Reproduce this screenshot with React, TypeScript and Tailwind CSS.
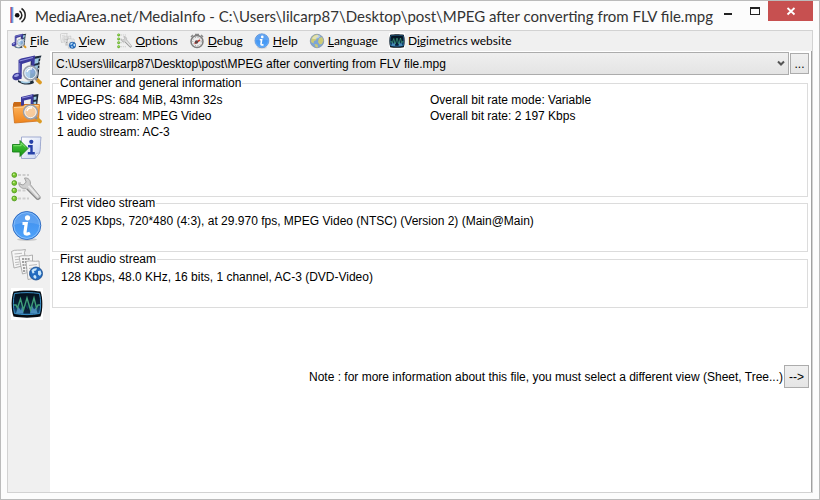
import type { ReactNode } from "react";

interface IconProps {
  className?: string;
}

interface LensProps {
  glass: string;
}

const Lens = ({ glass }: LensProps) => (
  <>
    <path d="m26.500 26 2.500 2.500" stroke="#dc9a24" strokeWidth="3.800" strokeLinecap="round" />
    <path d="m24 24 2 2" stroke="#8b8b95" strokeWidth="2.400" />
    <circle cx="19.500" cy="19" r="6.900" fill={glass} fillOpacity=".8" stroke="#9a9fa8" strokeWidth="1.600" />
    <circle cx="19.500" cy="19" r="5.700" fill="none" stroke="#f2f5f8" strokeWidth="1" />
    <path d="M16 18a4 4 0 0 1 5-3" fill="none" stroke="#fff" strokeWidth="1.400" />
  </>
);

const MediaIcon = ({ className }: IconProps) => (
  <svg viewBox="0 0 32 32" className={className} aria-hidden="true">
    <path d="M20 3 30.500 1.500C28 7 29 14 27 24H19z" fill="#1d2b3a" />
    <path d="m23 5 5-1-1 5-4 1zM22.500 12l4.500-1-.5 5-4 1z" fill="#9cc9e4" />
    <path d="M29 3.500v1.500M28.200 7v1.500M28 10.500V12M27.700 14v1.500" stroke="#e8f0f5" strokeWidth="1" />
    <path d="M7 26c5 3 10 3 15 0l1 3c-5 2.500-11 2-16-1z" fill="#1d2b3a" />
    <path d="M10 27.500c3 1.500 6 1.500 9 .5" fill="none" stroke="#a8d0e8" strokeWidth="1.800" />
    <path d="M7.500 6 10 4.500 24 1.500l-1 18h-3l.500-12.500-9.500 3-.5 15H7.500z" fill="#3c3a9c" />
    <path d="M8.500 7 22 3.500" stroke="#8e90dc" strokeWidth="1.200" />
    <path d="M8.700 9v14" stroke="#7577cb" strokeWidth="1" />
    <ellipse cx="6" cy="22.500" rx="4.800" ry="3.600" transform="rotate(-18 6 22.500)" fill="#3d3b9d" />
    <ellipse cx="5.300" cy="21.600" rx="2.500" ry="1.400" transform="rotate(-18 5 21)" fill="#9b9fe2" />
    <Lens glass="#9cc6ea" />
  </svg>
);

const FolderIcon = ({ className }: IconProps) => (
  <svg viewBox="0 0 32 32" className={className} aria-hidden="true">
    <defs>
      <linearGradient id="folder" x2="0" y2="1">
        <stop stopColor="#ffb65e" />
        <stop offset="1" stopColor="#ee841d" />
      </linearGradient>
    </defs>
    <path d="M2 11 3 9h7l1.500 2H28v4H2z" fill="#c96a16" />
    <path d="m21 2 6.500-1L26 13h-5z" fill="#1d2b3a" />
    <path d="m22.500 4 3-.5-.2 3-2.800.5zM22.500 9l2.700-.5v3l-2.700.3z" fill="#9cc9e4" />
    <path d="M10 4 22.500 1 22 13h-2.500l.3-7L13 7.500V13h-3z" fill="#3c3a9c" />
    <path d="M11 5 21 2.700" stroke="#8e90dc" />
    <path d="M2 13.500 12 13l2-1.500h14.500L27.500 28 3.500 30z" fill="url(#folder)" stroke="#cf711b" strokeWidth=".8" />
    <path d="m3 14.500 9.500-.5 2-1.500h12.800" fill="none" stroke="#ffd59a" />
    <Lens glass="#f6d6b4" />
  </svg>
);

const ExportIcon = ({ className }: IconProps) => (
  <svg viewBox="0 0 32 32" className={className} aria-hidden="true">
    <defs>
      <linearGradient id="sheet" x2="1" y2="1">
        <stop stopColor="#ffffff" />
        <stop offset="1" stopColor="#c6d3f2" />
      </linearGradient>
      <linearGradient id="arrow" x2="0" y2="1">
        <stop stopColor="#4fd044" />
        <stop offset="1" stopColor="#149312" />
      </linearGradient>
    </defs>
    <path d="M10.500 5H30c-1 7 0 12-1.500 16L24 26.500H10.500z" fill="url(#sheet)" stroke="#98a4cc" strokeWidth=".9" />
    <path d="m24 26.500 1-5 3.500-.5z" fill="#f5f8ff" stroke="#98a4cc" strokeWidth=".6" />
    <circle cx="20.300" cy="9.800" r="2.100" fill="#2540a8" />
    <path d="M17 14.300h3.500v6.500M16.800 21.300h7" fill="none" stroke="#2540a8" strokeWidth="2.400" />
    <path d="M1.500 12.500H9v-4l8 8L9 24.500v-4.500H1.500z" fill="url(#arrow)" stroke="#17801a" strokeWidth=".9" />
    <path d="M2.500 13.700h7.600V11l4.400 4" fill="none" stroke="#8ae878" strokeWidth=".9" />
  </svg>
);

const OptionsIcon = ({ className }: IconProps) => (
  <svg viewBox="0 0 32 32" className={className} aria-hidden="true">
    <path d="M7 4h3M11.500 4h3M16 4h2M7 12h3M7 19.500h3M11.500 19.500h3M7 27.500h3M11.500 27.500h3M16 27.500h2" stroke="#cdcdcd" strokeWidth="2" />
    <g fill="#78c52e" stroke="#4d981b" strokeWidth=".8">
      <circle cx="3.300" cy="4" r="2.400" />
      <circle cx="3.300" cy="12" r="2.400" />
      <circle cx="3.300" cy="19.500" r="2.400" />
      <circle cx="3.300" cy="27.500" r="2.400" />
    </g>
    <g fill="#c5f291">
      <circle cx="2.800" cy="3.300" r=".9" />
      <circle cx="2.800" cy="11.300" r=".9" />
      <circle cx="2.800" cy="18.800" r=".9" />
      <circle cx="2.800" cy="26.800" r=".9" />
    </g>
    <path d="M13.500 7c4-.5 6.500 2.500 5.800 6.500L29 25.500c1.200 2-1.500 4.200-3.500 2.500L14.800 17.300c-3.500.7-6.500-1-7-4.500l4.400 1.200 3-3z" fill="#d0d0d0" stroke="#9a9a9a" strokeWidth=".9" />
    <path d="m17.500 15 9.500 10.500" stroke="#ededed" strokeWidth="1.500" />
    <path d="m16 18 9.500 9.700c1.300 1 3 .3 3.400-1" fill="none" stroke="#888" strokeWidth="1.100" />
  </svg>
);

const InfoIcon = ({ className }: IconProps) => (
  <svg viewBox="0 0 32 32" className={className} aria-hidden="true">
    <defs>
      <linearGradient id="info" x2="0" y2="1">
        <stop stopColor="#3f8cea" />
        <stop offset="1" stopColor="#4ea3fb" />
      </linearGradient>
    </defs>
    <ellipse cx="16" cy="29.500" rx="10" ry="1.500" fill="#c9c9c9" />
    <circle cx="15.800" cy="15.500" r="14" fill="url(#info)" stroke="#2c67bb" strokeWidth=".9" />
    <circle cx="15.800" cy="15.500" r="12.900" fill="none" stroke="#8fc3fb" strokeWidth=".9" />
    <path d="M3.500 15a12.300 12.300 0 0 1 24.600 0c-7-3-17-3-24.600 0z" fill="#8dbcf6" fillOpacity=".35" />
    <circle cx="16.500" cy="7.800" r="2.600" fill="#fff" />
    <path d="M11.500 13.500h3.700l-1.200 8.500c-.3 2.500 2.500 2.500 5 1" fill="none" stroke="#fff" strokeWidth="3.200" />
  </svg>
);

const Globe = () => (
  <>
    <circle cx="25" cy="24.500" r="6.500" fill="#236cc0" stroke="#164886" strokeWidth=".8" />
    <path d="M20.500 21.500c1.500-2 4-2.500 5.500-2l-1 2-2 .5.500 2-2 .5zM27 22l2.500-.5 1 3-1.500 2.500-2-1.500zM23 26l2 .5.500 2-1.300 1.500-2-2z" fill="#c7e5f9" />
  </>
);

const SheetsIcon = ({ className }: IconProps) => (
  <svg viewBox="0 0 32 32" className={className} aria-hidden="true">
    <g fill="#f6f6f6" stroke="#a8a8a8" strokeWidth=".9">
      <path d="M.5 2.500C4 0 8 2 14.500.5L13.500 3.500 15 16 3 19z" />
      <path d="M8 7.500c4-2 8 .5 13.500-1.500V22l-10 3z" />
      <path d="M15 12.500c5-1.500 8 .5 13-.5l1 16-12 2.500z" />
    </g>
    <path d="M3.500 5 11 4.200M3.700 8l4-.5M4 10.700l4-.5M4 13.500l4.500-.5M4.500 16l4-1M18 16.500l8-1M18 19.500l3-.5M18.500 22.500h1M18.500 25.500h1" stroke="#bdbdbd" strokeWidth="1.100" />
    <path d="M11 10h8M11 13h4M11.500 16H15M12 19h3.500M12 22h3.500" stroke="#858585" strokeWidth="1.500" strokeDasharray="2 .8" />
    <Globe />
  </svg>
);

const WaveIcon = ({ className }: IconProps) => (
  <svg viewBox="0 0 32 32" className={className} aria-hidden="true">
    <defs>
      <linearGradient id="glow" x2="0" y2="1">
        <stop stopColor="#04101a" />
        <stop offset=".5" stopColor="#072138" />
        <stop offset="1" stopColor="#1c5f95" />
      </linearGradient>
    </defs>
    <rect width="32" height="32" fill="#fff" />
    <path d="M2.500 3.500C10 2 22 2 29.500 3.500 32 10 32 22 29.500 28.500 22 30 10 30 2.500 28.500 0 22 0 10 2.500 3.500z" fill="#050b12" />
    <path d="M3.500 5.500c8-1.200 17-1.200 25 0 1.500 6 1.500 15 0 20-8 1.500-17 1.500-25 0-1.500-6-1.500-14 0-20z" fill="url(#glow)" stroke="#3a8fc6" strokeWidth="1" />
    <path d="m5 25.500 2-7 3 4 1.500-6 1 9zM19 25.500l2-8 2 4 2-2 1.500 6z" fill="#6fb9e6" fillOpacity=".6" />
    <path d="M12.500 25.500V15l4 6 2.500-3v7.500z" fill="#050d1a" fillOpacity=".65" />
    <path d="M3 17h2l1.500 3 3-9 3 11L16 10l3.500 12L23 10l2.500 10 1.500-3h2" fill="none" stroke="#3f9d78" strokeWidth="1.400" />
  </svg>
);

const DebugIcon = ({ className }: IconProps) => (
  <svg viewBox="0 0 32 32" className={className} aria-hidden="true">
    <path d="M12 3h8M4 8l4-4M28 8l-4-4" stroke="#888" strokeWidth="3" />
    <circle cx="16" cy="17" r="12" fill="#eee" stroke="#7d7d7d" strokeWidth="3" />
    <circle cx="16" cy="17" r="8.500" fill="none" stroke="#999" strokeWidth="2" strokeDasharray="2 3" />
    <path d="m11 21 11-7" stroke="#cc3b31" strokeWidth="3" />
    <circle cx="15" cy="18" r="3.500" fill="#5d4545" />
  </svg>
);

const LanguageIcon = ({ className }: IconProps) => (
  <svg viewBox="0 0 32 32" className={className} aria-hidden="true">
    <circle cx="16" cy="16" r="13.500" fill="#7ca5d7" stroke="#8492a2" strokeWidth="1.500" />
    <path d="M5 10c3-5 8-7 12-7l2 4-5 3 1 4-5 2-1 5-5-3zM20 10l6-2 3 7-3 7-5 1-3-5zM11 22l6 1 1 6-5-1z" fill="#cdcb75" />
    <path d="M6 11c3-6 11-9 17-5-4 5-10 8-17 5z" fill="#fff" fillOpacity=".45" />
  </svg>
);

const AppLogo = () => (
  <svg viewBox="0 0 18 17" className="h-[17px] w-[18px] shrink-0" aria-hidden="true">
    <path d="M1 0v16" stroke="#e02a2a" strokeWidth="1.200" />
    <path d="M2 0v16" stroke="#2451db" strokeWidth="1.200" />
    <path d="M3 0v16" stroke="#55b5de" strokeWidth=".7" />
    <circle cx="7.200" cy="8.200" r="2.300" fill="#111" />
    <path d="M9.500 4a5 5 0 0 1 0 8.500" fill="none" stroke="#222" strokeWidth="1.500" />
    <path d="M11.500 1.500a8 8 0 0 1 0 13.500" fill="none" stroke="#222" strokeWidth="1.500" />
  </svg>
);

const menus = [
  { key: "F", rest: "ile", Icon: MediaIcon },
  { key: "V", rest: "iew", Icon: SheetsIcon },
  { key: "O", rest: "ptions", Icon: OptionsIcon },
  { key: "D", rest: "ebug", Icon: DebugIcon },
  { key: "H", rest: "elp", Icon: InfoIcon },
  { key: "L", rest: "anguage", Icon: LanguageIcon },
];

const tools = [
  { label: "Open file", Icon: MediaIcon },
  { label: "Open folder", Icon: FolderIcon },
  { label: "Export", Icon: ExportIcon },
  { label: "Options", Icon: OptionsIcon },
  { label: "About", Icon: InfoIcon },
  { label: "View", Icon: SheetsIcon },
  { label: "Digimetrics", Icon: WaveIcon },
];

const TitleBar = () => (
  <header className="flex h-[29px] items-start pl-[9px] pr-[6px]">
    <div className="flex h-[29px] min-w-0 flex-1 items-center gap-[7px]">
      <AppLogo />
      <h1 className="whitespace-nowrap font-['Lato',sans-serif] text-[15px] leading-7 text-[#333]">
        MediaArea.net/MediaInfo - C:\Users\lilcarp87\Desktop\post\MPEG after converting from FLV file.mpg
      </h1>
    </div>
    <button type="button" aria-label="Minimize" className="flex h-5 w-[26px] items-center justify-center">
      <svg viewBox="0 0 12 12" className="size-3" aria-hidden="true">
        <path d="M2 9h8" stroke="#222" strokeWidth="2" />
      </svg>
    </button>
    <button type="button" aria-label="Maximize" className="flex h-5 w-[27px] items-center justify-center">
      <svg viewBox="0 0 12 12" className="size-3" aria-hidden="true">
        <path d="M1 2h10v8H1z" fill="#222" />
        <path d="M2 4h8v5H2z" fill="#fcfcfc" />
      </svg>
    </button>
    <button type="button" aria-label="Close" className="flex h-5 w-[45px] items-center justify-center bg-[#c75050]">
      <svg viewBox="0 0 12 12" className="size-3" aria-hidden="true">
        <path d="m2.500 3 7 6.500m0-6.500-7 6.500" stroke="#fff" strokeWidth="1.800" />
      </svg>
    </button>
  </header>
);

const MenuBar = () => (
  <nav className="flex h-5 items-center gap-[11px] bg-[#f0f0f0] pl-[3px] font-['Lato',sans-serif] text-[12px] leading-4 text-black">
    {menus.map(({ key, rest, Icon }) => (
      <button key={key} type="button" className="flex items-center gap-[3px]">
        <Icon className="size-4" />
        <span>
          <span className="underline">{key}</span>
          {rest}
        </span>
      </button>
    ))}
    <button type="button" className="flex items-center gap-[3px]">
      <WaveIcon className="size-4" />
      <span>
        D<span className="underline">i</span>gimetrics website
      </span>
    </button>
  </nav>
);

interface GroupProps {
  title: string;
  className: string;
  children: ReactNode;
}

const Group = ({ title, className, children }: GroupProps) => (
  <fieldset className={`border border-[#dcdcdc] ${className}`}>
    <legend className="ml-[6px] px-px leading-3">{title}</legend>
    {children}
  </fieldset>
);

const App = () => {
  return (
    <div className="flex min-h-screen flex-col border border-[#bbb] bg-[#fcfcfc] font-['Liberation_Sans',sans-serif] text-[12px] leading-4 text-black">
      <TitleBar />
      <div className="mx-[6px] mb-[6px] flex flex-1 flex-col border border-[#d2d2d2]">
        <MenuBar />
        <div className="flex flex-1">
          <aside className="flex w-[42px] shrink-0 flex-col items-center gap-[7px] bg-[#f0f0f0] pr-[4px] pt-[3px]">
            {tools.map(({ label, Icon }) => (
              <button key={label} type="button" aria-label={label}>
                <Icon className="block size-8" />
              </button>
            ))}
          </aside>
          <main className="min-w-0 flex-1 border-r border-[#a0a0a0] bg-white pl-[2px] pr-[2px] pt-px">
            <div className="flex items-center gap-px">
              <div className="relative min-w-0 flex-1">
                <select
                  aria-label="File"
                  className="block h-[23px] w-full appearance-none border border-[#acacac] bg-linear-to-b from-[#efefef] to-[#e4e4e4] pl-[3px] pr-5 text-[12px]"
                >
                  <option>C:\Users\lilcarp87\Desktop\post\MPEG after converting from FLV file.mpg</option>
                </select>
                <svg viewBox="0 0 8 7" className="pointer-events-none absolute right-1 top-2 h-[7px] w-2" aria-hidden="true">
                  <path d="m1 1.500 3 3 3-3" fill="none" stroke="#555" strokeWidth="2" />
                </svg>
              </div>
              <button
                type="button"
                className="h-[21px] w-[19px] border border-[#acacac] bg-linear-to-b from-[#f0f0f0] to-[#e5e5e5] text-[12px] leading-4"
              >
                ...
              </button>
            </div>
            <div className="mt-[2px] flex flex-col pr-px">
              <Group title="Container and general information" className="h-[120px]">
                <div className="grid grid-cols-2 px-1 pt-[3px]">
                  <div>
                    <p>MPEG-PS: 684 MiB, 43mn 32s</p>
                    <p>1 video stream: MPEG Video</p>
                    <p>1 audio stream: AC-3</p>
                  </div>
                  <div>
                    <p>Overall bit rate mode: Variable</p>
                    <p>Overall bit rate: 2 197 Kbps</p>
                  </div>
                </div>
              </Group>
              <Group title="First video stream" className="mb-px h-[55px]">
                <p className="px-2 pt-1">2 025 Kbps, 720*480 (4:3), at 29.970 fps, MPEG Video (NTSC) (Version 2) (Main@Main)</p>
              </Group>
              <Group title="First audio stream" className="h-[55px]">
                <p className="px-2 pt-1">128 Kbps, 48.0 KHz, 16 bits, 1 channel, AC-3 (DVD-Video)</p>
              </Group>
            </div>
            <div className="mt-[57px] flex items-center justify-end gap-px">
              <p>Note : for more information about this file, you must select a different view (Sheet, Tree...)</p>
              <button
                type="button"
                className="h-[23px] w-[25px] border border-[#acacac] bg-linear-to-b from-[#f0f0f0] to-[#e5e5e5] text-[12px] leading-4"
              >
                {"-->"}
              </button>
            </div>
          </main>
        </div>
      </div>
    </div>
  );
};

export default App;
